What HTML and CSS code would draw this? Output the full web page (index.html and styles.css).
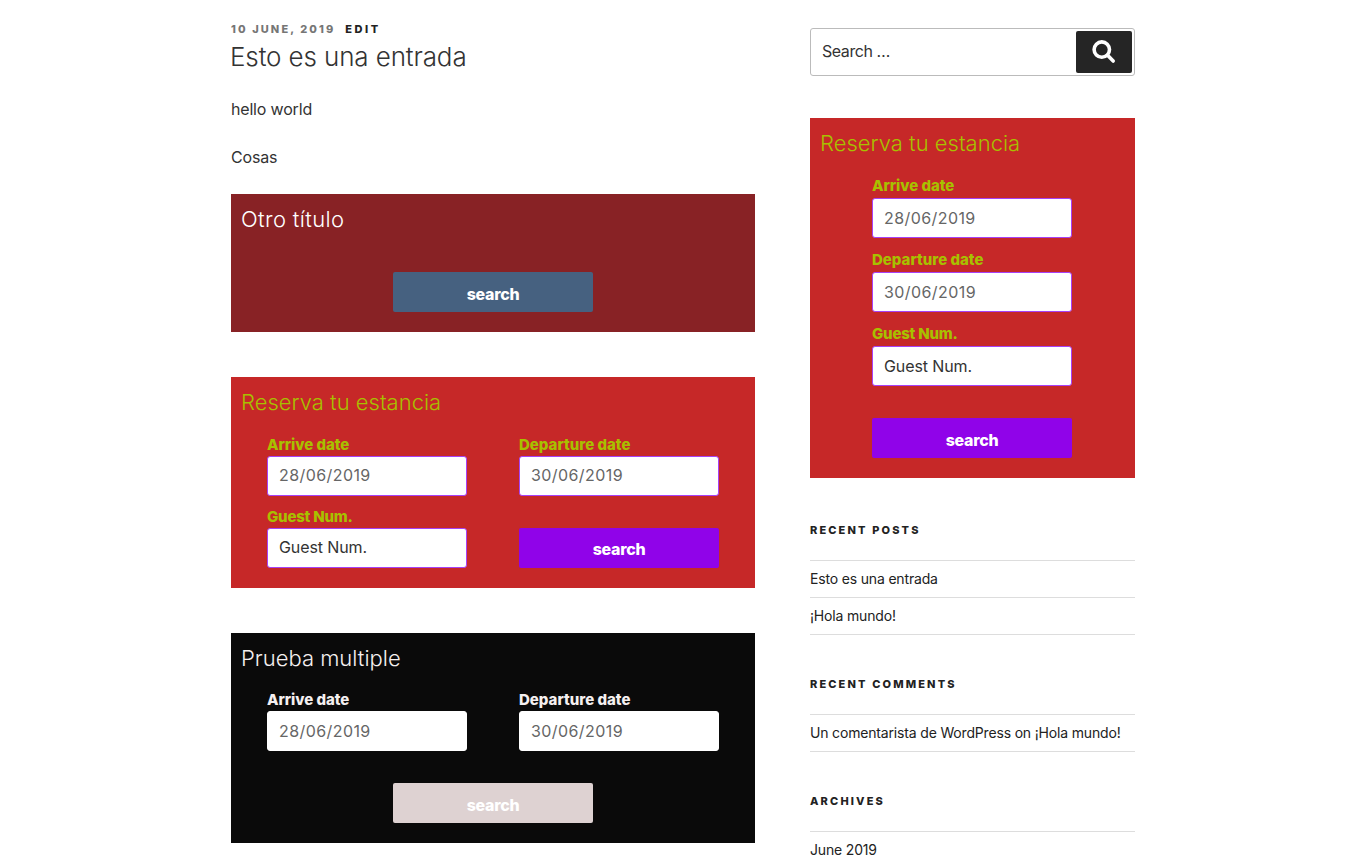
FILE: index.html
```html
<!DOCTYPE html>
<html lang="es">
<head>
<meta charset="utf-8">
<title>Esto es una entrada</title>
<link rel="stylesheet" href="styles.css">
</head>
<body>
<div class="wrap">
  <main class="content">
    <div class="meta"><span class="date">10 June, 2019</span><a class="edit">Edit</a></div>
    <h1 class="entry-title">Esto es una entrada</h1>
    <p class="para">hello world</p>
    <p class="para">Cosas</p>

    <section class="card card-wine">
      <h2 class="card-title t-otro">Otro título</h2>
      <div class="fields"><button class="btn">search</button></div>
    </section>

    <section class="card card-red">
      <h2 class="card-title">Reserva tu estancia</h2>
      <div class="fields two">
        <div class="field"><label>Arrive date</label><div class="input date-value">28/06/2019</div></div>
        <div class="field"><label class="l-depart">Departure date</label><div class="input date-value">30/06/2019</div></div>
        <div class="field"><label class="l-guest">Guest Num.</label><div class="input guest">Guest Num.</div></div>
        <button class="btn">search</button>
      </div>
    </section>

    <section class="card card-black">
      <h2 class="card-title">Prueba multiple</h2>
      <div class="fields two">
        <div class="field"><label>Arrive date</label><div class="input date-value">28/06/2019</div></div>
        <div class="field"><label class="l-depart">Departure date</label><div class="input date-value">30/06/2019</div></div>
        <button class="btn full">search</button>
      </div>
    </section>
  </main>

  <aside class="sidebar">
    <form class="search">
      <span class="search-text">Search …</span>
      <span class="search-btn"><svg viewBox="0 0 24 24" width="24" height="24"><circle cx="9.8" cy="9.6" r="7.7"/><path d="M15.6 15.3l5.6 5.7"/></svg></span>
    </form>

    <section class="card card-red card-side">
      <h2 class="card-title">Reserva tu estancia</h2>
      <div class="fields">
        <div class="field"><label>Arrive date</label><div class="input date-value">28/06/2019</div></div>
        <div class="field"><label class="l-depart">Departure date</label><div class="input date-value">30/06/2019</div></div>
        <div class="field"><label class="l-guest">Guest Num.</label><div class="input guest">Guest Num.</div></div>
        <button class="btn">search</button>
      </div>
    </section>

    <section class="widget">
      <h3>Recent Posts</h3>
      <ul><li><a>Esto es una entrada</a></li><li><a>¡Hola mundo!</a></li></ul>
    </section>
    <section class="widget">
      <h3>Recent Comments</h3>
      <ul><li class="comment"><a>Un comentarista de WordPress</a> on <a>¡Hola mundo!</a></li></ul>
    </section>
    <section class="widget">
      <h3>Archives</h3>
      <ul><li><a>June 2019</a></li></ul>
    </section>
  </aside>
</div>
</body>
</html>
```

FILE: styles.css
```css
* { box-sizing: border-box; }
body { margin: 0; background: #fff; color: #333; font: 400 16px/24px Inter, "Open Sans", sans-serif; }
h1, h2, h3, p, ul { margin: 0; padding: 0; font-weight: inherit; }
ul { list-style: none; }
.wrap { width: 904px; height: 864px; overflow: hidden; margin-left: 231px; display: flex; justify-content: space-between; }
.content { width: 524px; padding-top: 20px; }
.sidebar { width: 325px; padding-top: 28px; }

.meta { display: flex; gap: 10px; height: 18px; font-size: 11px; line-height: 18px; font-weight: 800; letter-spacing: 2.1px; text-transform: uppercase; color: #767676; }
.edit { color: #222; letter-spacing: 2.5px; }
.entry-title { height: 36px; font-size: 26px; line-height: 38px; font-weight: 300; letter-spacing: -.12px; margin: 0 0 23px -1px; }
.para { height: 24px; margin-bottom: 24px; letter-spacing: -.18px; }

.card { padding: 10px 10px 20px; margin-bottom: 45px; }
.card-title { height: 30px; font-size: 22px; line-height: 30px; font-weight: 300; }
.t-otro { letter-spacing: .36px; }
.card-wine { background: #882225; color: #fff; height: 138px; }
.card-wine .btn { background: #466180; }
.card-red { background: #c62828; color: #a8c000; height: 211px; }
.card-red .btn { background: #9003e9; }
.card-red .input { border-color: #a742f6; }
.card-black { background: #0a0a0a; color: #f5f0f0; height: 210px; }
.card-black .btn { background: #ded2d2; }
.para + .card { margin-top: -1px; }
.content .para:nth-last-of-type(1) { margin-bottom: 26px; }

.fields { display: grid; justify-items: center; align-items: end; row-gap: 10px; margin-top: 16px; }
.two { grid-template-columns: 1fr 1fr; }
.card-wine .fields { margin-top: 38px; }
.card-red .two { margin-top: 17px; }
.card-red .two .input { line-height: 37px; }
.card-red .two .btn { line-height: 35px; padding-top: 3px; }
.full { grid-column: 1 / 3; margin-top: 22px; }
.field { width: 200px; }
label { display: block; height: 22px; font-size: 15px; line-height: 22px; font-weight: 800; letter-spacing: -.05px; white-space: nowrap; }
.l-depart { letter-spacing: 0; }
.l-guest { letter-spacing: -.2px; }
.input { height: 40px; padding: 0 11px; border: 1px solid #fff; border-radius: 3px; background: #fff; color: #333; line-height: 38px; letter-spacing: -.1px; }
.date-value { color: #666; letter-spacing: .42px; }
.btn { width: 200px; height: 40px; padding: 4px 0 0; border: 0; border-radius: 2px; color: #fff; font: 800 16px/36px Inter, sans-serif; letter-spacing: -.3px; }

.card-side { height: 360px; margin: 42px 0 43px; padding-right: 11px; }
.card-side label { height: 24px; line-height: 24px; }
.card-side .btn { margin-top: 22px; }

.search { height: 48px; border: 1px solid #bbb; border-radius: 3px; padding: 2px 2px 2px 11px; display: flex; align-items: center; justify-content: space-between; }
.search-text { padding-bottom: 2px; letter-spacing: -.5px; letter-spacing: -.45px; }
.search-btn { width: 56px; height: 42px; border-radius: 2px; background: #252525; display: flex; align-items: center; justify-content: center; }
.search-btn svg { fill: none; stroke: #fff; stroke-width: 3.6; stroke-linecap: round; }

.widget { margin-bottom: 40px; }
.widget h3 { height: 18px; font-size: 11px; line-height: 18px; font-weight: 800; letter-spacing: 2.15px; text-transform: uppercase; color: #222; margin-bottom: 21px; }
.widget ul { border-top: 1px solid #ddd; }
.widget li { height: 37px; border-bottom: 1px solid #ddd; font-size: 14px; line-height: 36px; letter-spacing: -.17px; color: #222; white-space: nowrap; }
```
